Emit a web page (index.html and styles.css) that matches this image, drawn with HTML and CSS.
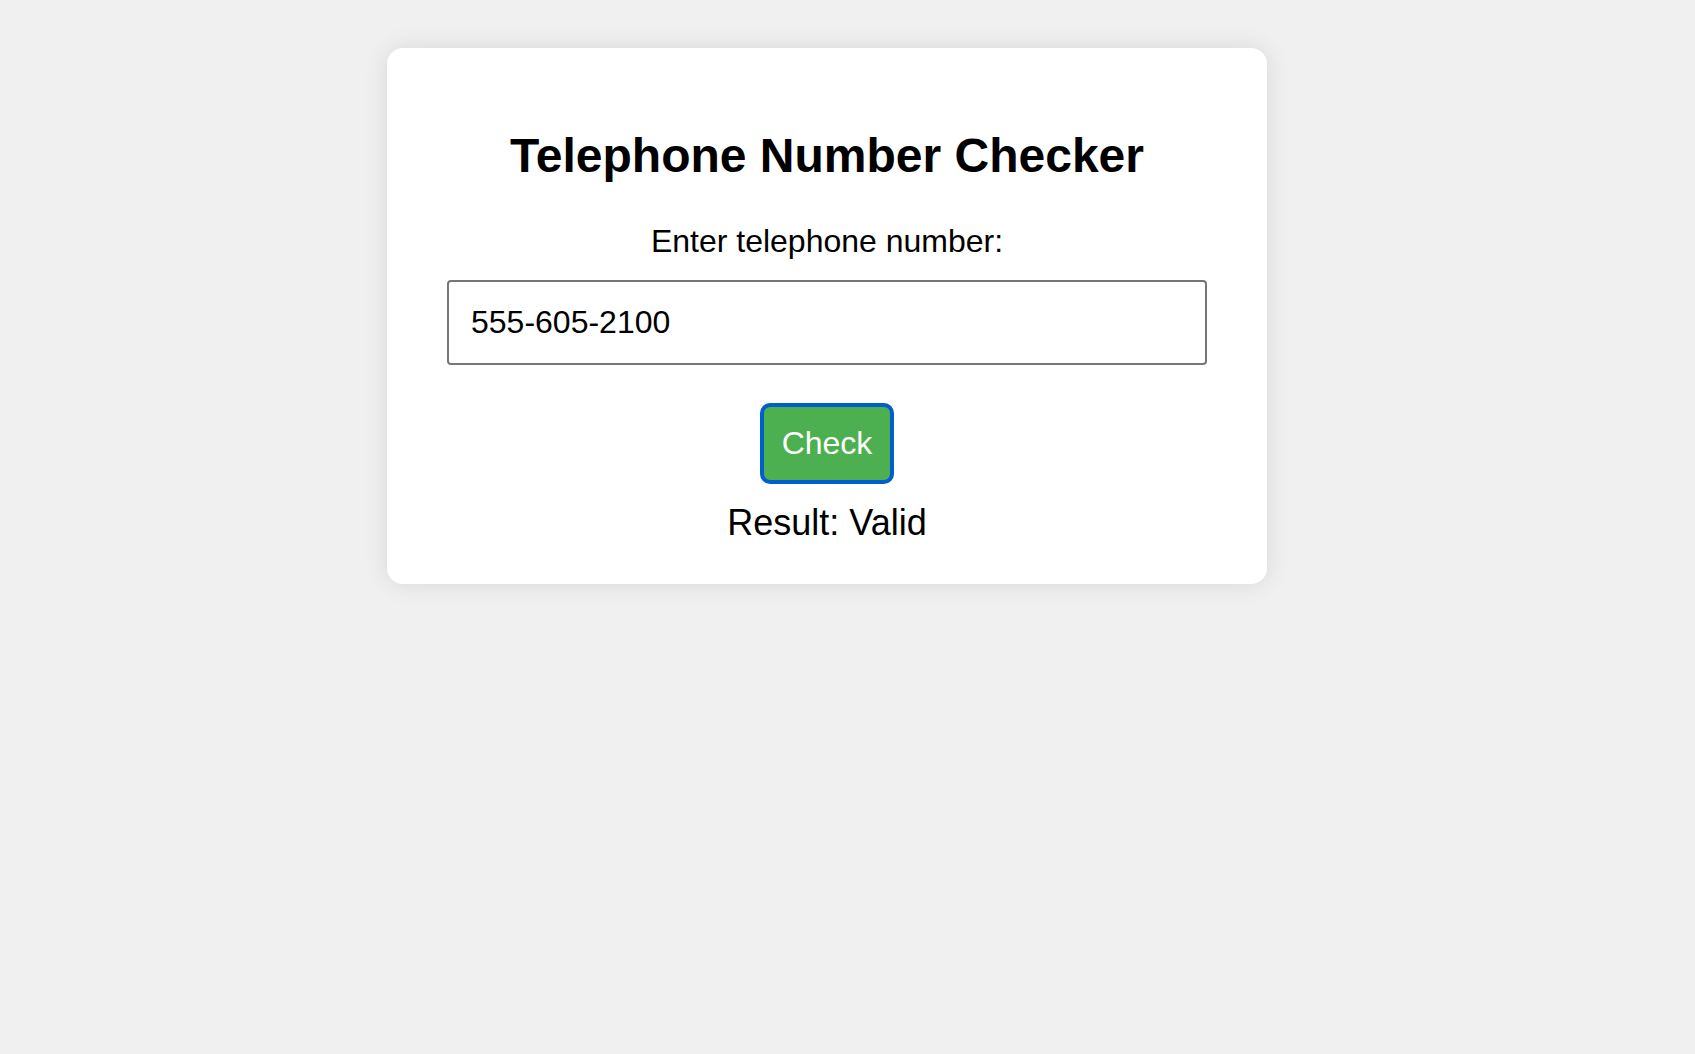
FILE: index.html
```html
<!DOCTYPE html>
<html lang="en">
<head>
<meta charset="UTF-8">
<meta name="viewport" content="width=device-width, initial-scale=1">
<title>Telephone Number Checker</title>
<link rel="stylesheet" href="styles.css">
</head>
<body>
<main class="container">
<h1 class="title">Telephone Number Checker</h1>
<form class="checker">
<label class="label" for="phone">Enter telephone number:</label>
<input class="phone" type="text" id="phone" value="555-605-2100">
<button class="check" type="button">Check</button>
</form>
<p class="result" role="status">Result: Valid</p>
</main>
</body>
</html>
```

FILE: styles.css
```css
body {
  margin: 0;
  padding: 48px 41px 48px 0;
  background: #f0f0f0;
  color: #000;
  font-family: "Liberation Sans", Arial, sans-serif;
  font-size: 32px;
}

.container {
  box-sizing: border-box;
  max-width: 880px;
  margin: 0 auto;
  padding: 78px 60px 36px;
  border-radius: 16px;
  background: #fff;
  box-shadow: 0 0 24px rgba(0, 0, 0, 0.1);
  text-align: center;
}

.title {
  margin: 0 0 30px;
  font-size: 48px;
  line-height: 60px;
}

.checker {
  display: flex;
  flex-direction: column;
  align-items: center;
}

.label {
  line-height: 50px;
}

.phone {
  box-sizing: border-box;
  width: 100%;
  height: 85px;
  margin: 14px 0 40px;
  padding: 20px 22px;
  border: 2px solid #767676;
  border-radius: 4px;
  background: #fff;
  color: #000;
  font: inherit;
}

.check {
  height: 77px;
  padding: 0 20px;
  border: 0;
  border-radius: 8px;
  outline: 4px solid #005fcc;
  outline-offset: -2px;
  background: #4caf50;
  color: #fff;
  font: inherit;
}

.result {
  margin: 16px 0 0;
  font-size: 36px;
  line-height: 50px;
}
```
